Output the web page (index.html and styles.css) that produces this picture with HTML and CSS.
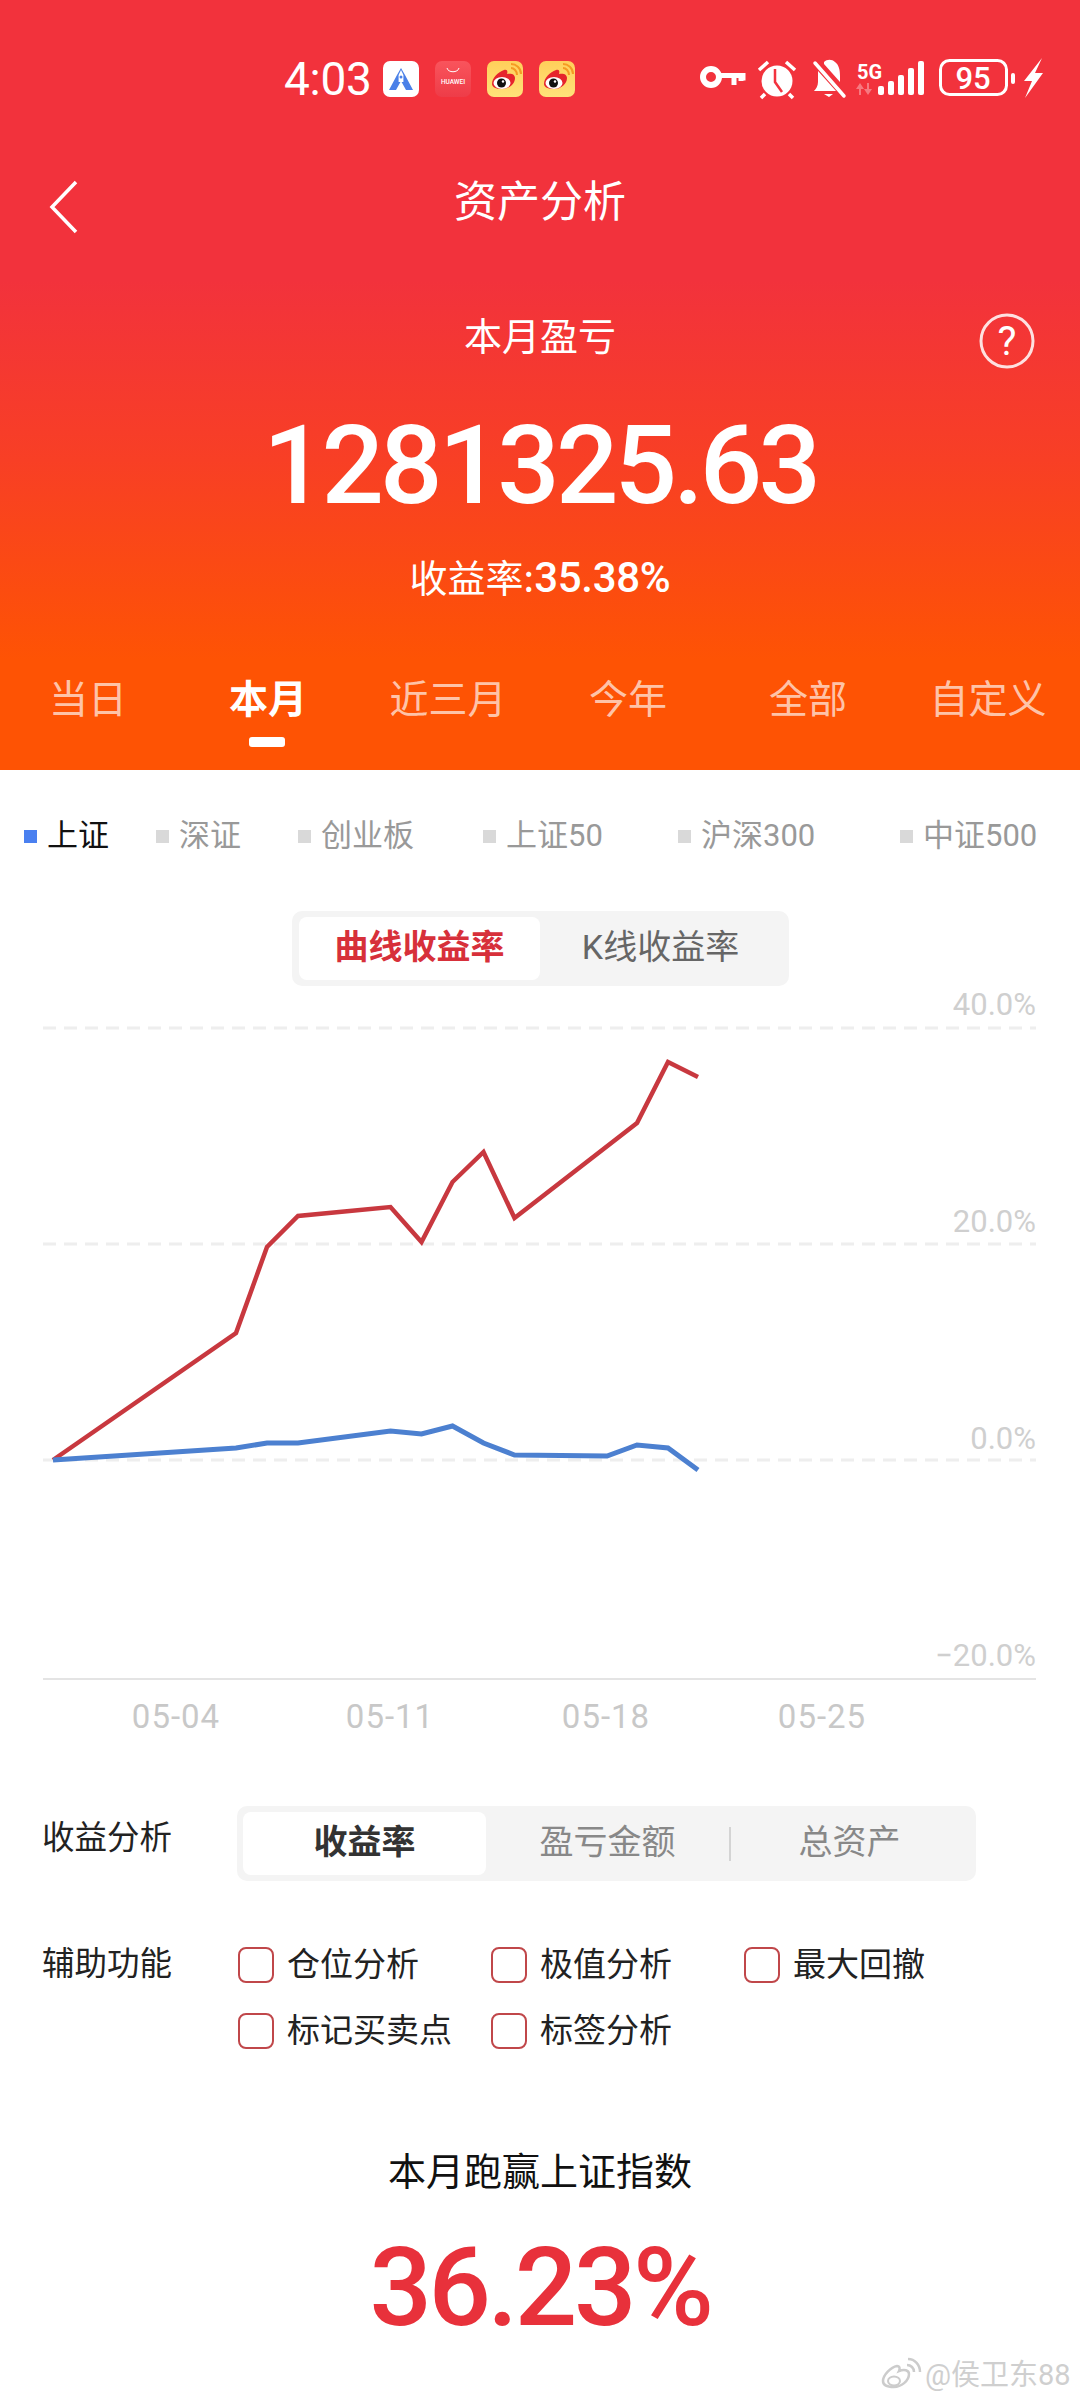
FILE: index.html
```html
<!DOCTYPE html>
<html lang="zh-CN">
<head>
<meta charset="utf-8">
<title>资产分析</title>
<link rel="stylesheet" href="styles.css">
</head>
<body>
<div class="page">
  <header class="hero">
    <div class="status">
      <span class="clock">4:03</span>
      <div class="apps">
        <svg class="app" viewBox="0 0 36 36"><rect width="36" height="36" rx="7" fill="#fff"/><path d="M18 7l4 7 8 15h-7l-5-9-5 9H6l8-15z" fill="#4a80e8"/><path d="M18 9l2.400 5v7h-4.800v-7z" fill="#fff"/><circle cx="18" cy="16" r="1.500" fill="#4a80e8"/></svg>
        <svg class="app" viewBox="0 0 36 36"><defs><linearGradient id="hw" x1="0" y1="0" x2="0" y2="1"><stop offset="0" stop-color="#f9545c"/><stop offset="1" stop-color="#ee3c48"/></linearGradient></defs><rect width="36" height="36" rx="7" fill="url(#hw)"/><path d="M12 7c1 5 11 5 12 0" fill="none" stroke="#fff" stroke-width="1"/><text x="18" y="23" class="hw-text">HUAWEI</text></svg>
        <svg class="app" viewBox="0 0 36 36"><defs><linearGradient id="wb" x1="0" y1="0" x2="0" y2="1"><stop offset="0" stop-color="#ffcf5a"/><stop offset="1" stop-color="#ffe27a"/></linearGradient><g id="weibo"><rect width="36" height="36" rx="7" fill="url(#wb)"/><path d="M5 23c0-6 6-12 12-14 3-1 4 1 3 4 4-1 8 0 8 4 0 6-6 11-13 11-6 0-10-2-10-5z" fill="#e6242c"/><ellipse cx="15" cy="22" rx="8.500" ry="6" fill="#fff"/><circle cx="14.500" cy="22" r="4.500" fill="#111"/><circle cx="16" cy="20.500" r="1.200" fill="#fff"/><path d="M24 7c3 0 6 3 6 7M24 3c5 0 10 4 10 10" fill="none" stroke="#f59a23" stroke-width="2"/></g></defs><use href="#weibo"/></svg>
        <svg class="app" viewBox="0 0 36 36"><use href="#weibo"/></svg>
      </div>
      <svg class="sys" viewBox="695 55 350 50">
        <g fill="none" stroke="#fff">
          <circle cx="711" cy="78" r="8" stroke-width="6"/>
          <path d="M719 76.500h24v5M734 76v10M741 76v6" stroke-width="5"/>
          <path d="M759 71l9-8M795 71l-9-8M765 95l-4 4M789 95l4 4" stroke-width="3.500"/>
          <path d="M815 64l29 33" stroke-width="3.500" stroke-linecap="round"/>
        </g>
        <circle cx="777" cy="82" r="15.500" fill="#fff"/>
        <path d="M775 70v13l7 10" fill="none" stroke="#f3333f" stroke-width="2.500"/>
        <path d="M824 63c3-3 8-3 11 0 4 3 5 8 5 14l0 6-16-18zM818 72l18 20h-22c2-2 4-5 4-9zM824 95h9l-4 3z" fill="#fff"/>
        <text x="857" y="80" class="net">5G</text>
        <path d="M860 84l-4 6h3v6h2v-6h3zM868 96l4-6h-3v-6h-2v6h-3z" fill="#fff" opacity=".35"/>
        <g fill="#fff">
          <rect x="878" y="87" width="6" height="9" rx="2"/>
          <rect x="888" y="82" width="6" height="14" rx="2"/>
          <rect x="898" y="76" width="6" height="20" rx="2"/>
          <rect x="908" y="69" width="6" height="27" rx="2"/>
          <rect x="918" y="62" width="6" height="34" rx="2"/>
        </g>
        <rect x="940.500" y="61.500" width="66" height="34" rx="9" fill="none" stroke="#fff" stroke-width="3"/>
        <text x="973" y="90" class="batt">95</text>
        <rect x="1011" y="74" width="4" height="11" rx="2" fill="#fff"/>
        <path d="M1042 59L1024 82h8l-7 17 18-25h-8l7-15z" fill="#fff"/>
      </svg>
    </div>

    <div class="nav">
      <svg class="back" viewBox="0 0 30 54"><path d="M27 2L3 27l24 25" fill="none" stroke="#fff" stroke-width="3.500"/></svg>
      <h1 class="title">资产分析</h1>
    </div>

    <div class="pnl-row">
      <span class="pnl-label">本月盈亏</span>
      <svg class="help" viewBox="0 0 56 56"><circle cx="28" cy="28" r="26" fill="none" stroke="#fff" stroke-opacity=".85" stroke-width="3"/><text x="28" y="42" class="help-q">?</text></svg>
    </div>
    <div class="amount">1281325.63</div>
    <div class="rate">收益率:<span class="rate-num">35.38%</span></div>

    <nav class="tabs">
      <div class="tab">当日</div>
      <div class="tab active">本月</div>
      <div class="tab">近三月</div>
      <div class="tab">今年</div>
      <div class="tab">全部</div>
      <div class="tab">自定义</div>
    </nav>
  </header>

  <main class="main">
    <div class="legend">
      <div class="lg on"><i class="sq"></i>上证</div>
      <div class="lg"><i class="sq"></i>深证</div>
      <div class="lg"><i class="sq"></i>创业板</div>
      <div class="lg"><i class="sq"></i>上证50</div>
      <div class="lg"><i class="sq"></i>沪深300</div>
      <div class="lg"><i class="sq"></i>中证500</div>
    </div>

    <div class="seg seg-chart">
      <div class="seg-item sel red">曲线收益率</div>
      <div class="seg-item">K线收益率</div>
    </div>

    <svg class="chart" viewBox="0 986 1080 754">
      <g class="grid">
        <path d="M43 1028H1036M43 1244H1036M43 1460H1036"/>
      </g>
      <path class="axis" d="M43 1679H1036"/>
      <text x="1036" y="1015" class="yl">40.0%</text>
      <text x="1036" y="1232" class="yl">20.0%</text>
      <text x="1036" y="1449" class="yl">0.0%</text>
      <text x="1036" y="1666" class="yl">−20.0%</text>
      <text x="176" y="1728" class="xl">05-04</text>
      <text x="390" y="1728" class="xl">05-11</text>
      <text x="606" y="1728" class="xl">05-18</text>
      <text x="822" y="1728" class="xl">05-25</text>
      <polyline class="ln red-ln" points="53,1460 236,1333 267,1247 298,1216 390.500,1207 421.500,1242 452.500,1182 483.500,1152 514.500,1218 637,1123 668,1062 698,1077"/>
      <polyline class="ln blue-ln" points="53,1460 236,1448 267,1443 298,1443 390.500,1431 421.500,1434 452.500,1426 483.500,1443 514.500,1455 607,1456 637,1445 668,1448 698,1470"/>
    </svg>

    <section class="row row-profit">
      <div class="row-label">收益分析</div>
      <div class="seg seg-wide">
        <div class="seg-cell sel bold">收益率</div>
        <div class="seg-cell">盈亏金额</div>
        <div class="seg-cell divided">总资产</div>
      </div>
    </section>

    <section class="row row-aux">
      <div class="row-label">辅助功能</div>
      <div class="checks">
        <label class="chk"><i class="box"></i>仓位分析</label>
        <label class="chk"><i class="box"></i>极值分析</label>
        <label class="chk"><i class="box"></i>最大回撤</label>
        <label class="chk"><i class="box"></i>标记买卖点</label>
        <label class="chk"><i class="box"></i>标签分析</label>
      </div>
    </section>

    <h2 class="beat-title">本月跑赢上证指数</h2>
    <div class="beat-val">36.23%</div>
  </main>

  <div class="mark">
    <svg class="mark-logo" viewBox="0 0 42 36"><path d="M3 24c0-6 8-14 14-15 3 0 3 3 2 5 5-2 10-1 10 3 0 7-8 13-15 13S3 28 3 24z" fill="none" stroke="#ccc" stroke-width="2.500"/><ellipse cx="14" cy="24" rx="6" ry="4.500" fill="none" stroke="#ccc" stroke-width="2"/><path d="M27 8c4 0 7 3 7 7M28 2c7 0 12 6 12 13" fill="none" stroke="#ccc" stroke-width="2.500"/></svg>
    <span>@侯卫东88</span>
  </div>
</div>
</body>
</html>
```

FILE: styles.css
```css
* { box-sizing: border-box; margin: 0; padding: 0; }
html, body { width: 1080px; height: 2400px; background: #fff; overflow: hidden; }
body { font-family: Roboto, "Noto Sans CJK SC", sans-serif; color: #111; }
.page { position: relative; width: 1080px; height: 2400px; overflow: hidden; }

/* Header */
.hero {
  height: 770px;
  background: linear-gradient(180deg, #f2323c 0, #f2323c 280px, #f83f25 460px, #fe5304 660px, #fe5304 100%);
  color: #fff;
}
.status { height: 100px; padding: 58px 0 0 284px; display: flex; align-items: center; }
.clock { font: 400 46px/44px Roboto, sans-serif; width: 99px; letter-spacing: -.3px; flex: none; }
.apps { display: flex; gap: 16px; }
.app { width: 36px; height: 36px; display: block; }
.hw-text { font: 500 6.500px Roboto, sans-serif; fill: #fff; text-anchor: middle; }
.sys { width: 350px; height: 50px; margin-left: 120px; flex: none; }
.net { font: 700 20px Roboto, sans-serif; fill: #fff; }
.batt { font: 500 31px Roboto, sans-serif; fill: #fff; text-anchor: middle; }

.nav { height: 196px; position: relative; display: flex; align-items: center; justify-content: center; }
.back { width: 30px; height: 54px; position: absolute; left: 49px; top: 80px; }
.title { font: 400 43px/60px "Noto Sans CJK SC", sans-serif; }

.pnl-row { height: 76px; margin-bottom: 29px; position: relative; display: flex; align-items: center; justify-content: center; }
.pnl-label { font: 400 38px/50px "Noto Sans CJK SC", sans-serif; }
.help { width: 56px; height: 56px; position: absolute; right: 45px; top: 17px; }
.help-q { font: 400 40px Roboto, sans-serif; fill: #fff; text-anchor: middle; }

.amount { height: 130px; font: 500 110px/130px Roboto, sans-serif; letter-spacing: -3.900px; text-align: center; }
.rate { margin-top: 15px; height: 60px; font: 400 38px/60px "Noto Sans CJK SC", sans-serif; text-align: center; }
.rate-num { font: 500 42px/60px Roboto, sans-serif; letter-spacing: -.3px; }

.tabs { margin-top: 61px; display: grid; grid-template-columns: repeat(6, 180px); margin-left: -2px; }
.tab { position: relative; height: 60px; text-align: center; font: 400 39px/58px "Noto Sans CJK SC", sans-serif; color: rgba(255,255,255,.68); }
.tab.active { color: #fff; font-weight: 700; }
.tab.active::after { content: ""; position: absolute; left: 71px; top: 70px; width: 36px; height: 10px; background: #fff; border-radius: 3px; }

/* Legend */
.legend { display: grid; grid-template-columns: 132px 142px 185px 195px 222px auto; padding: 45px 0 0 24px; height: 90px; font: 400 31px/42px Roboto, "Noto Sans CJK SC", sans-serif; color: #999; }
.lg { display: flex; align-items: center; gap: 10px; height: 42px; }
.lg.on { color: #111; }
.sq { width: 13px; height: 13px; background: #d9d9d9; flex: none; }
.on .sq { background: #4a80f0; }

/* Segmented */
.seg { background: #f4f4f4; border-radius: 10px; display: flex; }
.seg-chart { width: 497px; height: 75px; margin: 51px 0 0 292px; padding: 6px 7px; }
.seg-item { width: 241px; text-align: center; font: 400 34px/61px Roboto, "Noto Sans CJK SC", sans-serif; color: #666; border-radius: 8px; }
.seg-item.sel { background: #fff; }
.seg-item.red { color: #d7303a; font-weight: 700; }

/* Chart */
.chart { display: block; width: 1080px; height: 754px; }
.grid path { fill: none; stroke: #eeeeee; stroke-width: 3; stroke-dasharray: 13 8; }
.axis { stroke: #e4e4e4; stroke-width: 2; }
.yl { font: 400 31px Roboto, sans-serif; fill: #cfcfcf; text-anchor: end; }
.xl { font: 400 33px Roboto, sans-serif; fill: #c8c8c8; text-anchor: middle; letter-spacing: 1px; }
.ln { fill: none; stroke-width: 4.500; stroke-linejoin: miter; }
.red-ln { stroke: #c8383f; }
.blue-ln { stroke: #4c80d0; stroke-width: 5; }

/* Rows */
.row { display: flex; padding-left: 42px; }
.row-label { width: 195px; font: 400 32.500px/44px "Noto Sans CJK SC", sans-serif; color: #222; flex: none; }
.row-profit { margin-top: 66px; height: 75px; }
.row-profit .row-label { margin-top: 7px; }
.seg-wide { width: 739px; height: 75px; padding: 6px; }
.seg-cell { width: 243px; height: 63px; text-align: center; font: 400 34px/56px "Noto Sans CJK SC", sans-serif; color: #888; border-radius: 8px; position: relative; }
.seg-cell.sel { background: #fff; }
.seg-cell.bold { color: #333; font-weight: 700; }
.seg-cell.divided { width: 241px; }
.seg-cell.divided::before { content: ""; position: absolute; left: 0; top: 15px; width: 2px; height: 34px; background: #d4d4d4; }

.row-aux { margin-top: 66px; }
.row-aux .row-label { margin-top: -8px; }
.checks { display: grid; grid-template-columns: repeat(3, 253px); row-gap: 30px; margin-left: 1px; }
.chk { display: flex; align-items: flex-start; height: 36px; gap: 13px; font: 400 33px/30px "Noto Sans CJK SC", sans-serif; color: #222; white-space: nowrap; }
.box { width: 36px; height: 36px; border: 2px solid #c0474a; border-radius: 8px; flex: none; }

/* Beat */
.beat-title { margin-top: 93px; text-align: center; font: 400 38px/54px "Noto Sans CJK SC", sans-serif; color: #111; }
.beat-val { margin-top: 27px; text-align: center; font: 500 110px/130px Roboto, sans-serif; color: #e8313b; letter-spacing: -3.400px; }

/* Watermark overlay */
.mark { position: absolute; left: 880px; top: 2355px; display: flex; align-items: center; gap: 3px; font: 400 29px/40px Roboto, "Noto Sans CJK SC", sans-serif; color: #cfcfcf; white-space: nowrap; }
.mark-logo { width: 42px; height: 36px; flex: none; }
```
